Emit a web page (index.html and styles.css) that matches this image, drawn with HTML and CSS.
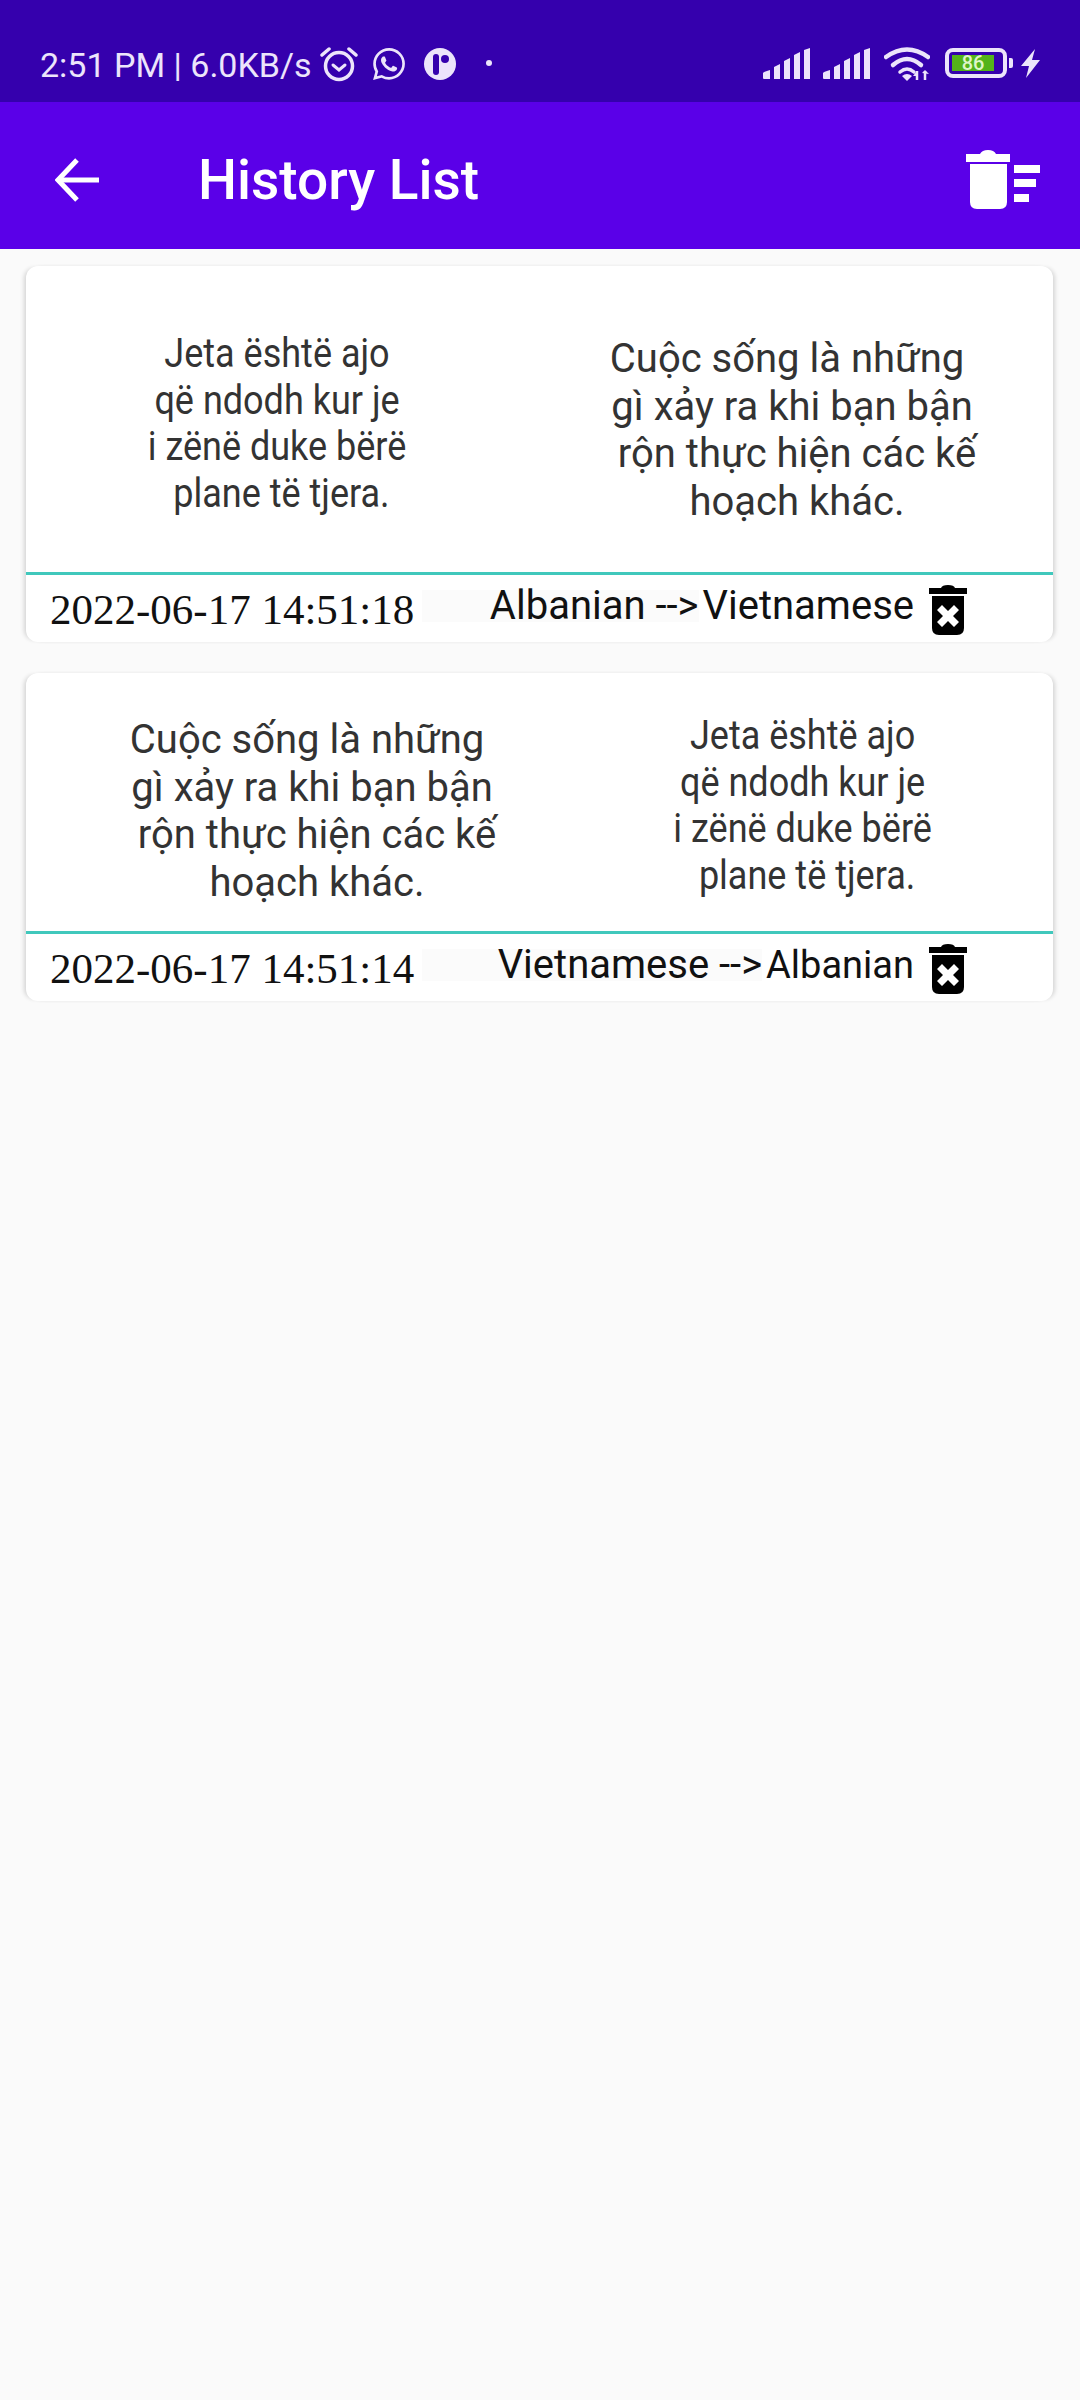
FILE: index.html
```html
<!DOCTYPE html>
<html lang="en">
<head>
    <meta charset="UTF-8">
    <meta name="viewport" content="width=device-width, initial-scale=1.0">
    <title>History List</title>
    <link rel="stylesheet" href="styles.css">
</head>
<body>
    <svg class="defs" width="0" height="0">
        <symbol id="trash-x" viewBox="0 0 38 50">
            <path d="M12 3 Q13 0 19 0 Q25 0 26 3 H38 V9 H0 V3 Z"/>
            <path fill-rule="evenodd" d="M3 11 H35 V43 Q35 50 28 50 H10 Q3 50 3 43 Z M13 20 L8 25 L14 31 L8 37 L13 42 L19 36 L25 42 L30 37 L24 31 L30 25 L25 20 L19 26 Z"/>
        </symbol>
    </svg>

    <!-- Status bar -->
    <div class="status-bar">
        <div class="status-left">
            <span class="clock">2:51 PM | 6.0KB/s</span>
            <svg class="ic-alarm" viewBox="0 0 38 36" fill="none" stroke="currentColor">
                <circle cx="19" cy="20" r="13.5" stroke-width="3.5"/>
                <path d="M13 19 L19 24 L25 19" stroke-width="3" stroke-linecap="round"/>
                <path d="M2 9 L9 3 M36 9 L29 3" stroke-width="3.5" stroke-linecap="round"/>
            </svg>
            <svg class="ic-whatsapp" viewBox="0 0 24 24" fill="currentColor">
                <path d="M17.472 14.382c-.297-.149-1.758-.867-2.03-.967-.273-.099-.471-.148-.67.15-.197.297-.767.966-.94 1.164-.173.199-.347.223-.644.075-.297-.15-1.255-.463-2.39-1.475-.883-.788-1.48-1.761-1.653-2.059-.173-.297-.018-.458.13-.606.134-.133.298-.347.446-.52.149-.174.198-.298.298-.497.099-.198.05-.371-.025-.52-.075-.149-.669-1.612-.916-2.207-.242-.579-.487-.5-.669-.51-.173-.008-.371-.01-.57-.01-.198 0-.52.074-.792.372-.272.297-1.04 1.016-1.04 2.479 0 1.462 1.065 2.875 1.213 3.074.149.198 2.096 3.2 5.077 4.487.709.306 1.262.489 1.694.625.712.227 1.36.195 1.871.118.571-.085 1.758-.719 2.006-1.413.248-.694.248-1.289.173-1.413-.074-.124-.272-.198-.57-.347m-5.421 7.403h-.004a9.87 9.87 0 01-5.031-1.378l-.361-.214-3.741.982.998-3.648-.235-.374a9.86 9.86 0 01-1.51-5.26c.001-5.45 4.436-9.884 9.888-9.884 2.64 0 5.122 1.03 6.988 2.898a9.825 9.825 0 012.893 6.994c-.003 5.45-4.437 9.884-9.885 9.884m8.413-18.297A11.815 11.815 0 0012.05 0C5.495 0 .16 5.335.157 11.892c0 2.096.547 4.142 1.588 5.945L.057 24l6.305-1.654a11.882 11.882 0 005.683 1.448h.005c6.554 0 11.89-5.335 11.893-11.893a11.821 11.821 0 00-3.48-8.413z"/>
            </svg>
            <svg class="ic-app" viewBox="0 0 32 32">
                <circle cx="16" cy="16" r="16" fill="currentColor"/>
                <rect x="9" y="6" width="6" height="21" rx="3" fill="#3500ad"/>
                <circle cx="21" cy="11" r="4" fill="#3500ad"/>
            </svg>
            <span class="dot"></span>
        </div>
        <div class="status-right">
            <svg class="ic-signal" viewBox="0 0 48 31" fill="currentColor">
                <path d="M0 25 Q0 24 7 22 V31 H1 Q0 31 0 30 Z"/>
                <path d="M11 19 L17 16 V31 H11 Z"/>
                <path d="M21 13 L27 10 V31 H21 Z"/>
                <path d="M31 7 L37 4 V31 H31 Z"/>
                <path d="M41 2 L47 0 V31 H41 Z"/>
            </svg>
            <svg class="ic-signal" viewBox="0 0 48 31" fill="currentColor">
                <path d="M0 25 Q0 24 7 22 V31 H1 Q0 31 0 30 Z"/>
                <path d="M11 19 L17 16 V31 H11 Z"/>
                <path d="M21 13 L27 10 V31 H21 Z"/>
                <path d="M31 7 L37 4 V31 H31 Z"/>
                <path d="M41 2 L47 0 V31 H41 Z"/>
            </svg>
            <svg class="ic-wifi" viewBox="0 0 46 35" fill="none" stroke="currentColor" stroke-width="4.5" stroke-linecap="round">
                <path d="M2 11 Q23 -4 44 11"/>
                <path d="M9 19 Q23 7 37 19"/>
                <path d="M16 26 Q23 20 30 26" stroke-width="3.5"/>
                <path d="M18 30 L23 35 L28 30 Q23 26 18 30 Z" fill="currentColor" stroke="none"/>
                <path d="M33 25 V34 M41 25 V34" stroke-width="2.5" stroke-linecap="butt"/>
                <path d="M29 30 L33 25 L33 30 Z M38 27 L41 24 L45 28 Z" fill="currentColor" stroke="none"/>
            </svg>
            <div class="battery">
                <div class="battery-body">
                    <span class="battery-level">86</span>
                </div>
                <span class="battery-tip"></span>
            </div>
            <svg class="ic-bolt" viewBox="0 0 19 29" fill="currentColor">
                <path d="M14 0 L0 17 H8 L5 29 L19 11 H11 Z"/>
            </svg>
        </div>
    </div>

    <!-- App bar -->
    <header class="app-bar">
        <svg class="ic-back" viewBox="0 0 44 44" fill="none" stroke="#ffffff" stroke-width="5">
            <path d="M22 2 L3 22 L22 42"/>
            <path d="M3 22 H44"/>
        </svg>
        <h1 class="title">History List</h1>
        <svg class="ic-clear" viewBox="0 0 74 59" fill="#ffffff">
            <path d="M14 4 Q16 0 22 0 Q28 0 30 4 H44 V12 H0 V4 Z"/>
            <path d="M4 14 H41 V52 Q41 59 34 59 H11 Q4 59 4 52 Z"/>
            <rect x="48" y="15" width="26" height="8"/>
            <rect x="48" y="29" width="22" height="8"/>
            <rect x="48" y="44" width="15" height="8"/>
        </svg>
    </header>

    <main class="list">
        <!-- Albanian to Vietnamese -->
        <article class="card">
            <div class="texts texts-first">
                <p class="phrase phrase-sq">Jeta është ajo
që ndodh kur je
i zënë duke bërë
 plane të tjera.</p>
                <p class="phrase phrase-vi">Cuộc sống là những  
gì xảy ra khi bạn bận 
rộn thực hiện các kế
hoạch khác.</p>
            </div>
            <div class="meta">
                <span class="date">2022-06-17 14:51:18</span>
                <span class="lang-from">Albanian --&gt;</span>
                <span class="lang-to">Vietnamese</span>
                <svg class="ic-delete"><use href="#trash-x"/></svg>
            </div>
        </article>

        <!-- Vietnamese to Albanian -->
        <article class="card">
            <div class="texts texts-second">
                <p class="phrase phrase-vi">Cuộc sống là những  
gì xảy ra khi bạn bận 
rộn thực hiện các kế
hoạch khác.</p>
                <p class="phrase phrase-sq">Jeta është ajo
që ndodh kur je
i zënë duke bërë
 plane të tjera.</p>
            </div>
            <div class="meta">
                <span class="date">2022-06-17 14:51:14</span>
                <span class="lang-from">Vietnamese --&gt;</span>
                <span class="lang-to lang-to-small">Albanian</span>
                <svg class="ic-delete"><use href="#trash-x"/></svg>
            </div>
        </article>
    </main>
</body>
</html>
```

FILE: styles.css
```css
body {
    margin: 0;
    min-height: 2400px;
    background-color: #fafafa;
    font-family: 'Roboto', sans-serif;
}

.defs {
    display: block;
    height: 0;
}

/* Status bar */
.status-bar {
    height: 102px;
    box-sizing: border-box;
    background-color: #3500ad;
    color: #ece4fb;
    padding: 0 40px;
    display: flex;
    justify-content: space-between;
    align-items: center;
}

.status-left,
.status-right {
    display: flex;
    align-items: center;
    margin-top: 24px;
}

.clock {
    font-size: 34px;
    line-height: 40px;
    width: 280px;
    margin-top: 4px;
    white-space: nowrap;
}

.ic-alarm {
    width: 38px;
    height: 36px;
    margin-top: 2px;
}

.ic-whatsapp {
    width: 32px;
    height: 34px;
    margin-left: 15px;
    margin-top: 2px;
}

.ic-app {
    width: 32px;
    height: 32px;
    margin-left: 19px;
    margin-top: 2px;
}

.dot {
    width: 6px;
    height: 6px;
    border-radius: 50%;
    background-color: currentColor;
    margin-left: 30px;
}

.ic-signal {
    width: 48px;
    height: 31px;
    margin-right: 12px;
}

.ic-wifi {
    width: 46px;
    height: 35px;
    margin-left: 1px;
}

.battery {
    display: flex;
    align-items: center;
    margin-left: 15px;
}

.battery-body {
    width: 62px;
    height: 30px;
    box-sizing: border-box;
    border: 4px solid currentColor;
    border-radius: 8px;
    padding: 3px;
}

.battery-level {
    display: block;
    width: 42px;
    height: 16px;
    background-color: #54b31a;
    color: #dff5c8;
    font-size: 20px;
    font-weight: 500;
    line-height: 16px;
    text-align: center;
}

.battery-tip {
    width: 4px;
    height: 10px;
    margin-left: 2px;
    background-color: currentColor;
    border-radius: 0 2px 2px 0;
}

.ic-bolt {
    width: 19px;
    height: 29px;
    margin-left: 8px;
}

/* App bar */
.app-bar {
    height: 147px;
    box-sizing: border-box;
    background-color: #5a00e8;
    padding: 0 40px 0 55px;
    display: flex;
    align-items: center;
}

.ic-back {
    width: 44px;
    height: 44px;
    margin-top: 8px;
}

.title {
    margin: 9px 0 0 99px;
    flex: 1;
    color: #ffffff;
    font-size: 55px;
    font-weight: 500;
}

.ic-clear {
    width: 74px;
    height: 59px;
    margin-top: 8px;
}

/* History cards */
.list {
    padding: 17px 27px 0 26px;
    display: flex;
    flex-direction: column;
    gap: 31px;
}

.card {
    background-color: #ffffff;
    border-radius: 12px;
    box-shadow: -4px 0 4px -2px rgba(0, 0, 0, 0.15), 4px 0 4px -2px rgba(0, 0, 0, 0.15);
}

.texts {
    display: flex;
    box-sizing: border-box;
    border-bottom: 3px solid #40c8bc;
}

.texts-first {
    height: 309px;
    padding-top: 65px;
}

.texts-second {
    height: 261px;
    padding-top: 43px;
}

.phrase {
    margin: 0;
    text-align: center;
    white-space: pre;
    color: #333333;
}

/* the Albanian text is drawn narrower than the Vietnamese one */
.phrase-sq {
    font-size: 40px;
    line-height: 46.6px;
    transform: scaleX(0.9);
}

.phrase-vi {
    font-size: 40px;
    line-height: 47.6px;
}

.texts-first .phrase-sq {
    flex: 0 0 502px;
}

.texts-first .phrase-vi {
    flex: 1;
    padding-left: 13px;
    padding-top: 4px;
}

.texts-second .phrase-vi {
    flex: 0 0 582px;
}

.texts-second .phrase-sq {
    flex: 1;
    padding-right: 62px;
    margin-top: -3px;
}

.meta {
    height: 67px;
    padding: 0 86px 0 24px;
    display: flex;
    align-items: center;
}

.date {
    font-family: 'Liberation Serif', serif;
    font-size: 43px;
    color: #111111;
    margin-top: 2px;
}

.lang-from {
    flex: 1;
    margin-left: 8px;
    margin-top: -6px;
    text-align: right;
    font-size: 40px;
    line-height: 32px;
    color: #111111;
    background-color: #fbfbfb;
}

.lang-to {
    margin-left: 4px;
    margin-right: 15px;
    margin-top: -6px;
    font-size: 40px;
    line-height: 32px;
    color: #111111;
}

.lang-to-small {
    font-size: 38px;
}

.ic-delete {
    width: 38px;
    height: 50px;
    margin-top: 2px;
    fill: #000000;
}
```
